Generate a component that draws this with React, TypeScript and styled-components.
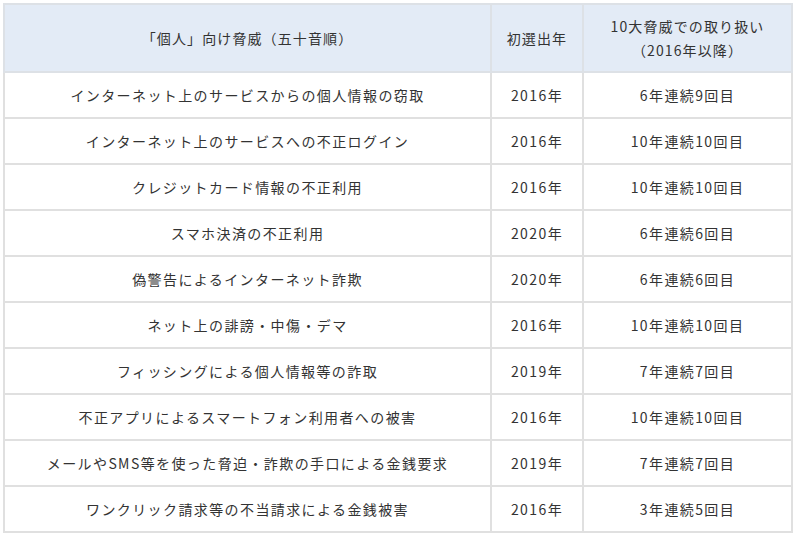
import styled, {createGlobalStyle} from 'styled-components';

const rows = [
  ['インターネット上のサービスからの個人情報の窃取', '2016年', '6年連続9回目'],
  ['インターネット上のサービスへの不正ログイン', '2016年', '10年連続10回目'],
  ['クレジットカード情報の不正利用', '2016年', '10年連続10回目'],
  ['スマホ決済の不正利用', '2020年', '6年連続6回目'],
  ['偽警告によるインターネット詐欺', '2020年', '6年連続6回目'],
  ['ネット上の誹謗・中傷・デマ', '2016年', '10年連続10回目'],
  ['フィッシングによる個人情報等の詐取', '2019年', '7年連続7回目'],
  ['不正アプリによるスマートフォン利用者への被害', '2016年', '10年連続10回目'],
  ['メールやSMS等を使った脅迫・詐欺の手口による金銭要求', '2019年', '7年連続7回目'],
  ['ワンクリック請求等の不当請求による金銭被害', '2016年', '3年連続5回目'],
];

function App() {
  return (
    <>
      <GlobalStyle />
      <Page>
        <Table>
          <colgroup>
            <col style={{width: 487}} />
            <col style={{width: 92}} />
            <col />
          </colgroup>
          <thead>
            <tr>
              <Th>「個人」向け脅威（五十音順）</Th>
              <Th>初選出年</Th>
              <Th>10大脅威での取り扱い<br />（2016年以降）</Th>
            </tr>
          </thead>
          <tbody>
            {rows.map((r) => (
              <tr key={r[0]}>
                <Td>{r[0]}</Td>
                <Td>{r[1]}</Td>
                <Td>{r[2]}</Td>
              </tr>
            ))}
          </tbody>
        </Table>
      </Page>
    </>
  )
}

const GlobalStyle = createGlobalStyle`
  body{
    margin: 0;
    background: #fff;
    font-family: "Noto Sans CJK JP", "Noto Sans", sans-serif;
    color: #333;
  }
`

const Page = styled.div`
  padding: 3px 7px 0 3px;
`

const Table = styled.table`
  width: 790px;
  border-collapse: collapse;
  table-layout: fixed;
  border: 2px solid #e0e0e0;
`

const Th = styled.th`
  height: 66px;
  padding: 0 4px;
  background: #e3ebf6;
  border: 2px solid #dde1e6;
  font-size: 14px;
  font-weight: 400;
  letter-spacing: 0.08em;
  line-height: 24px;
  text-align: center;
  vertical-align: middle;
`

const Td = styled.td`
  height: 44px;
  padding: 0 4px;
  border: 2px solid #e0e0e0;
  font-size: 14px;
  letter-spacing: 0.1em;
  text-align: center;
  vertical-align: middle;
`

export default App;
